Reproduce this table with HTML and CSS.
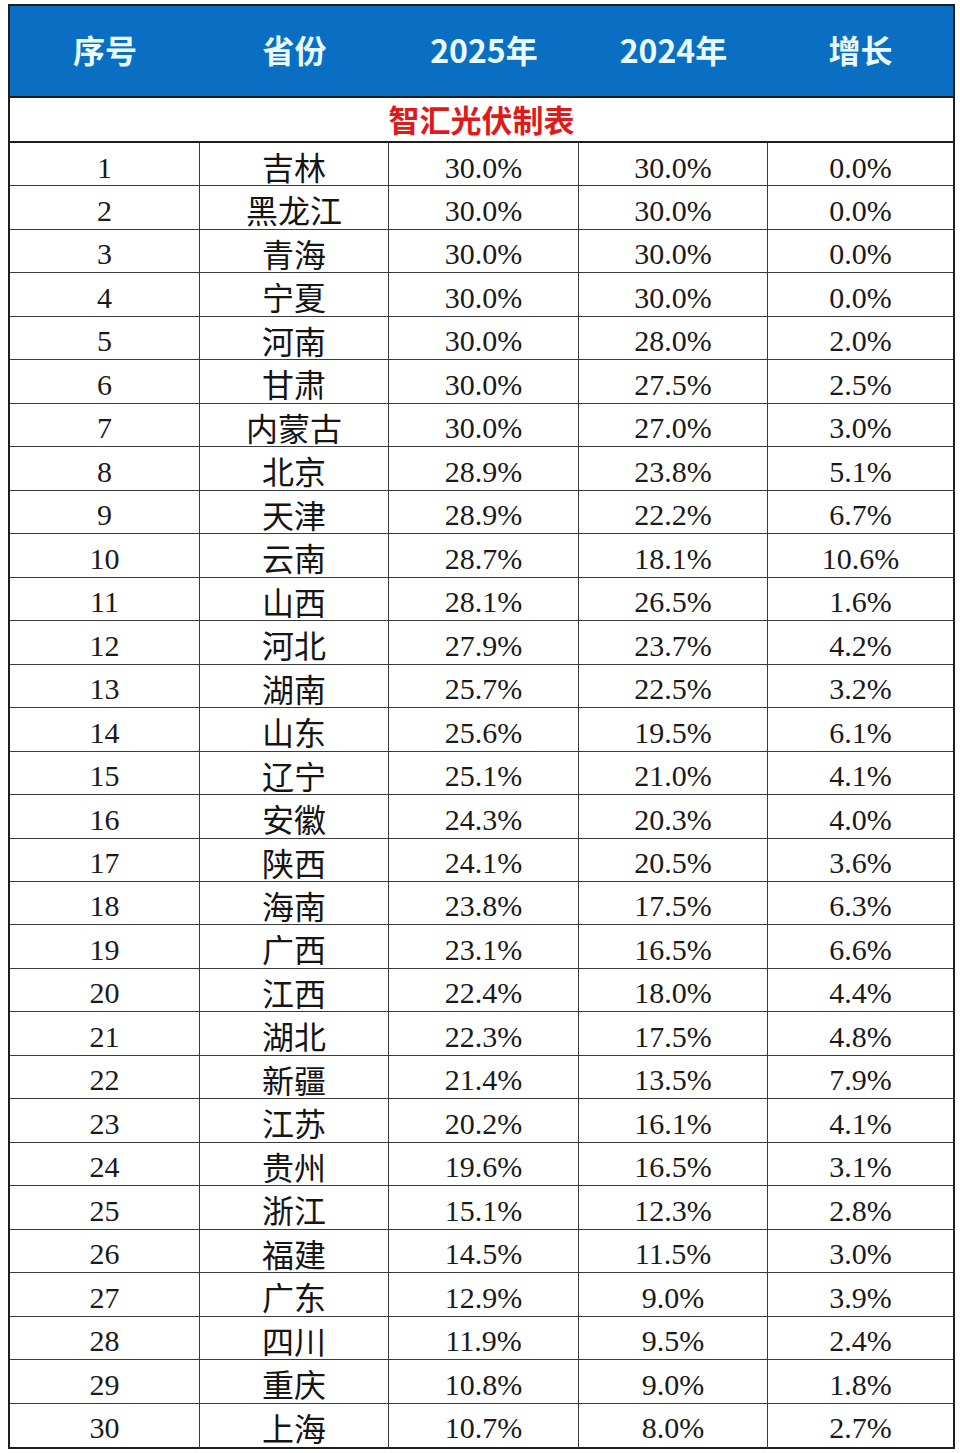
FILE: index.html
```html
<!DOCTYPE html>
<html lang="zh-CN">
<head>
<meta charset="utf-8">
<title>智汇光伏制表</title>
<link rel="stylesheet" href="styles.css">
</head>
<body>
<div class="sheet">
  <div class="head">
    <div>序号</div><div>省份</div><div>2025年</div><div>2024年</div><div>增长</div>
  </div>
  <div class="title">智汇光伏制表</div>
  <div class="body" id="body">
    <div class="row"><div>1</div><div class="zh">吉林</div><div>30.0%</div><div>30.0%</div><div>0.0%</div></div>
    <div class="row"><div>2</div><div class="zh">黑龙江</div><div>30.0%</div><div>30.0%</div><div>0.0%</div></div>
    <div class="row"><div>3</div><div class="zh">青海</div><div>30.0%</div><div>30.0%</div><div>0.0%</div></div>
    <div class="row"><div>4</div><div class="zh">宁夏</div><div>30.0%</div><div>30.0%</div><div>0.0%</div></div>
    <div class="row"><div>5</div><div class="zh">河南</div><div>30.0%</div><div>28.0%</div><div>2.0%</div></div>
    <div class="row"><div>6</div><div class="zh">甘肃</div><div>30.0%</div><div>27.5%</div><div>2.5%</div></div>
    <div class="row"><div>7</div><div class="zh">内蒙古</div><div>30.0%</div><div>27.0%</div><div>3.0%</div></div>
    <div class="row"><div>8</div><div class="zh">北京</div><div>28.9%</div><div>23.8%</div><div>5.1%</div></div>
    <div class="row"><div>9</div><div class="zh">天津</div><div>28.9%</div><div>22.2%</div><div>6.7%</div></div>
    <div class="row"><div>10</div><div class="zh">云南</div><div>28.7%</div><div>18.1%</div><div>10.6%</div></div>
    <div class="row"><div>11</div><div class="zh">山西</div><div>28.1%</div><div>26.5%</div><div>1.6%</div></div>
    <div class="row"><div>12</div><div class="zh">河北</div><div>27.9%</div><div>23.7%</div><div>4.2%</div></div>
    <div class="row"><div>13</div><div class="zh">湖南</div><div>25.7%</div><div>22.5%</div><div>3.2%</div></div>
    <div class="row"><div>14</div><div class="zh">山东</div><div>25.6%</div><div>19.5%</div><div>6.1%</div></div>
    <div class="row"><div>15</div><div class="zh">辽宁</div><div>25.1%</div><div>21.0%</div><div>4.1%</div></div>
    <div class="row"><div>16</div><div class="zh">安徽</div><div>24.3%</div><div>20.3%</div><div>4.0%</div></div>
    <div class="row"><div>17</div><div class="zh">陕西</div><div>24.1%</div><div>20.5%</div><div>3.6%</div></div>
    <div class="row"><div>18</div><div class="zh">海南</div><div>23.8%</div><div>17.5%</div><div>6.3%</div></div>
    <div class="row"><div>19</div><div class="zh">广西</div><div>23.1%</div><div>16.5%</div><div>6.6%</div></div>
    <div class="row"><div>20</div><div class="zh">江西</div><div>22.4%</div><div>18.0%</div><div>4.4%</div></div>
    <div class="row"><div>21</div><div class="zh">湖北</div><div>22.3%</div><div>17.5%</div><div>4.8%</div></div>
    <div class="row"><div>22</div><div class="zh">新疆</div><div>21.4%</div><div>13.5%</div><div>7.9%</div></div>
    <div class="row"><div>23</div><div class="zh">江苏</div><div>20.2%</div><div>16.1%</div><div>4.1%</div></div>
    <div class="row"><div>24</div><div class="zh">贵州</div><div>19.6%</div><div>16.5%</div><div>3.1%</div></div>
    <div class="row"><div>25</div><div class="zh">浙江</div><div>15.1%</div><div>12.3%</div><div>2.8%</div></div>
    <div class="row"><div>26</div><div class="zh">福建</div><div>14.5%</div><div>11.5%</div><div>3.0%</div></div>
    <div class="row"><div>27</div><div class="zh">广东</div><div>12.9%</div><div>9.0%</div><div>3.9%</div></div>
    <div class="row"><div>28</div><div class="zh">四川</div><div>11.9%</div><div>9.5%</div><div>2.4%</div></div>
    <div class="row"><div>29</div><div class="zh">重庆</div><div>10.8%</div><div>9.0%</div><div>1.8%</div></div>
    <div class="row"><div>30</div><div class="zh">上海</div><div>10.7%</div><div>8.0%</div><div>2.7%</div></div>
  </div>
</div>
</body>
</html>
```
FILE: styles.css
```css
html, body {
  margin: 0;
  padding: 0;
  background: #ffffff;
}
.sheet {
  margin: 4px 0 0 8px;
  width: 947px;
  box-sizing: border-box;
  border: 2px solid #1e1e1e;
}
.head {
  display: grid;
  grid-template-columns: 190px 189px 190px 189px 1fr;
  height: 90px;
  background: #0a6fc2;
  border-bottom: 2px solid #1e1e1e;
  font-family: "Noto Sans CJK SC", "Noto Sans", sans-serif;
  font-weight: 700;
  font-size: 32px;
  color: #e9fbfb;
}
.head > div {
  display: flex;
  align-items: center;
  justify-content: center;
  padding-bottom: 4px;
}
.title {
  height: 45px;
  border-bottom: 2px solid #1e1e1e;
  display: flex;
  align-items: center;
  justify-content: center;
  font-family: "Noto Sans CJK SC", sans-serif;
  font-weight: 700;
  font-size: 31px;
  color: #e0191b;
  padding-bottom: 2px;
  box-sizing: border-box;
}
.row {
  display: grid;
  grid-template-columns: 190px 189px 190px 189px 1fr;
  height: 43.47px;
  box-sizing: border-box;
  border-bottom: 1px solid #3a3a3a;
  font-family: "Liberation Serif", "Times New Roman", serif;
  font-size: 30px;
  color: #1a1a1a;
}
.row:last-child {
  border-bottom: none;
}
.row > div {
  display: flex;
  align-items: center;
  justify-content: center;
  border-right: 1px solid #3a3a3a;
  padding-top: 2px;
}
.row > div:last-child {
  border-right: none;
}
.row > div.zh {
  font-family: "Noto Sans CJK SC", sans-serif;
  font-size: 32px;
  padding-top: 0;
  padding-bottom: 1px;
  color: #151515;
}
```
